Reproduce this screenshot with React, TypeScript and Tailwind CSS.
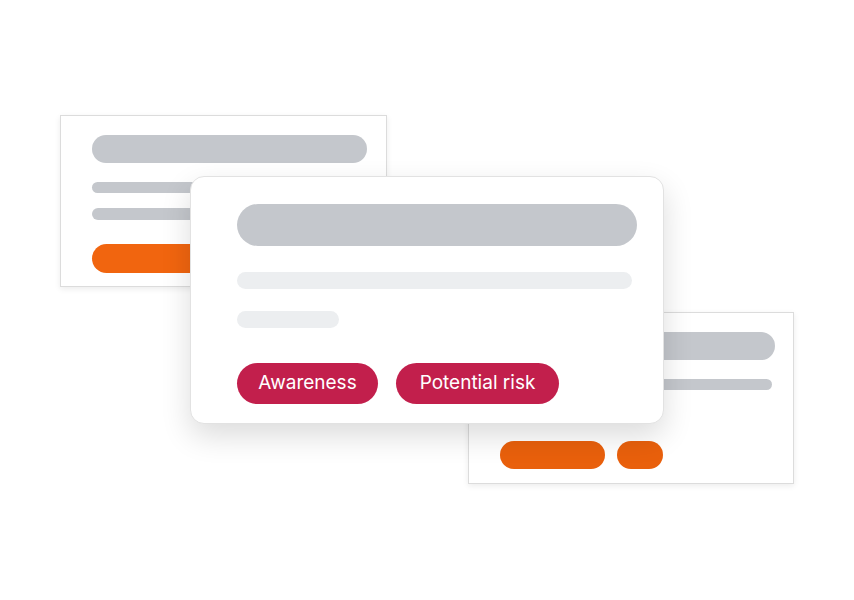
export default function App() {
  return (
    <main className="relative h-[600px] w-[854px] overflow-hidden bg-white" style={{ fontFamily: 'Inter, Roboto, "Liberation Sans", sans-serif' }}>
      {/* Back left card */}
      <div className="absolute left-[60px] top-[115px] flex h-[172px] w-[327px] flex-col border border-[#dcdcdc] bg-white px-[31px] pt-[19px] shadow-[0_2px_6px_rgba(0,0,0,0.08)]">
        <div className="h-[28px] w-[275px] rounded-full bg-[#c4c7cc]" />
        <div className="mt-[19px] h-[11px] w-[260px] rounded-full bg-[#c4c7cc]" />
        <div className="mt-[15px] h-[12px] w-[260px] rounded-full bg-[#c4c7cc]" />
        <div className="mt-[24px] h-[29px] w-[150px] rounded-full bg-[#f1650f]" />
      </div>

      {/* Back right card */}
      <div className="absolute left-[468px] top-[312px] flex h-[172px] w-[326px] flex-col border border-[#dcdcdc] bg-white px-[31px] pt-[19px] shadow-[0_2px_6px_rgba(0,0,0,0.08)]">
        <div className="h-[28px] w-[275px] rounded-full bg-[#c4c7cc]" />
        <div className="mt-[19px] h-[11px] w-[272px] rounded-full bg-[#c4c7cc]" />
        <div className="mt-[51px] flex gap-[12px]">
          <div className="h-[28px] w-[105px] rounded-full bg-[#e9600c]" />
          <div className="h-[28px] w-[46px] rounded-full bg-[#e9600c]" />
        </div>
      </div>

      {/* Front card */}
      <div className="absolute left-[190px] top-[176px] flex h-[248px] w-[474px] flex-col rounded-[14px] border border-[#e2e2e2] bg-white px-[46px] pt-[27px] shadow-[0_12px_30px_rgba(0,0,0,0.14)]">
        <div className="h-[42px] w-[400px] rounded-full bg-[#c4c7cc]" />
        <div className="mt-[26px] h-[17px] w-[395px] rounded-full bg-[#eceef0]" />
        <div className="mt-[22px] h-[17px] w-[102px] rounded-full bg-[#eceef0]" />
        <div className="mt-[35px] flex gap-[18px]">
          <span className="flex h-[41px] w-[141px] items-center justify-center rounded-full bg-[#c21f4c] text-[19px] text-white">Awareness</span>
          <span className="flex h-[41px] w-[163px] items-center justify-center rounded-full bg-[#c21f4c] text-[19px] text-white">Potential risk</span>
        </div>
      </div>
    </main>
  );
}
